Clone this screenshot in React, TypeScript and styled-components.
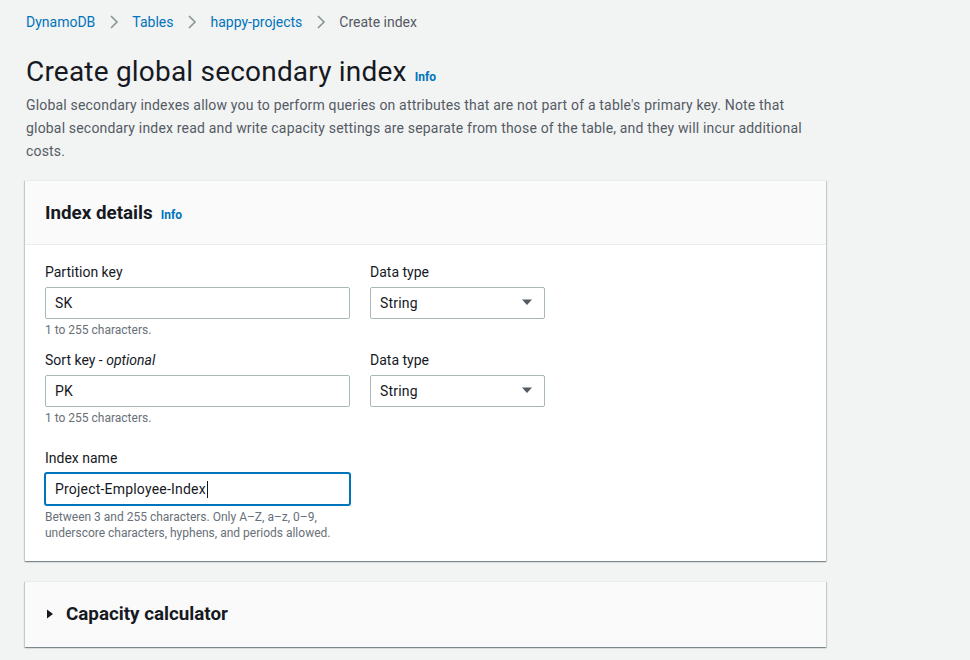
import React from "react";
import styled, { createGlobalStyle } from "styled-components";

const Global = createGlobalStyle`
  html, body { margin: 0; padding: 0; background: #f2f3f3; }
  body { font-family: Roboto, "Noto Sans", Arial, sans-serif; color: #16191f; -webkit-font-smoothing: antialiased; }
  * { box-sizing: border-box; }
`;

const Page = styled.div`
  width: 970px;
  height: 660px;
  overflow: hidden;
  padding: 12px 0 0 25px;
`;

const Crumbs = styled.nav`
  display: flex;
  align-items: center;
  height: 20px;
  padding-left: 1px;
  font-size: 14px;
  line-height: 20px;
`;

const CrumbLink = styled.a`
  color: #0073bb;
  text-decoration: none;
`;

const CrumbCurrent = styled.span`
  color: #545b64;
`;

const Sep = styled.span`
  display: inline-flex;
  width: 37px;
  justify-content: center;
  color: #879596;
`;

const TitleRow = styled.div`
  display: flex;
  align-items: baseline;
  gap: 8px;
  margin-top: 22px;
  padding-left: 1px;
`;

const Title = styled.h1`
  margin: 0;
  font-size: 28px;
  line-height: 36px;
  font-weight: 400;
  letter-spacing: 0.2px;
  color: #16191f;
`;

const Info = styled.a`
  color: #0073bb;
  font-size: 12px;
  font-weight: 700;
  text-decoration: none;
`;

const Description = styled.p`
  margin: 4px 0 0 1px;
  width: 800px;
  font-size: 14px;
  line-height: 23px;
  color: #545b64;
  letter-spacing: 0.18px;
`;

const Card = styled.section`
  width: 801px;
  margin-top: 17px;
  background: #fff;
  border-top: 1px solid #eaeded;
  box-shadow: 0 1px 1px 0 rgba(0, 28, 36, 0.3), 1px 1px 1px 0 rgba(0, 28, 36, 0.15),
    -1px 1px 1px 0 rgba(0, 28, 36, 0.15);
`;

const CardHeader = styled.header`
  display: flex;
  align-items: baseline;
  gap: 8px;
  height: 64px;
  padding: 20px 20px 0 20px;
  background: #fafafa;
  border-bottom: 1px solid #eaeded;
`;

const CardTitle = styled.h2`
  margin: 0;
  font-size: 18.8px;
  line-height: 24px;
  font-weight: 700;
  color: #16191f;
`;

const CardBody = styled.div`
  padding: 17px 20px 20px 20px;
  display: flex;
  flex-direction: column;
`;

const FieldRow = styled.div<{ $gap: number }>`
  display: flex;
  gap: 20px;
  margin-top: ${(p) => p.$gap}px;
`;

const Field = styled.div<{ $width: number }>`
  display: flex;
  flex-direction: column;
  width: ${(p) => p.$width}px;
`;

const Label = styled.label`
  font-size: 14px;
  line-height: 20px;
  color: #16191f;
  margin-bottom: 5px;
`;

const Optional = styled.i`
  font-style: italic;
`;

const Input = styled.div<{ $focused?: boolean }>`
  height: 32px;
  display: flex;
  align-items: center;
  padding: 0 9px;
  border: 1px solid ${(p) => (p.$focused ? "#0073bb" : "#aab7b8")};
  box-shadow: ${(p) => (p.$focused ? "0 0 0 1px #0073bb" : "none")};
  border-radius: 2px;
  background: #fff;
  font-size: 14px;
  letter-spacing: 0.2px;
  color: #16191f;
`;

const Caret = styled.span`
  display: inline-block;
  width: 1px;
  height: 17px;
  background: #16191f;
  margin-left: 1px;
`;

const Select = styled.div`
  height: 32px;
  display: flex;
  align-items: center;
  justify-content: space-between;
  padding: 0 11px 0 9px;
  border: 1px solid #aab7b8;
  border-radius: 2px;
  background: #fff;
  font-size: 14px;
  letter-spacing: 0.2px;
  color: #16191f;
`;

const Hint = styled.div<{ $gap?: number }>`
  margin-top: ${(p) => p.$gap ?? 3}px;
  font-size: 12px;
  line-height: 16px;
  color: #687078;
`;

const Collapsed = styled(Card)`
  margin-top: 20px;
  background: #fafafa;
`;

const CollapsedHeader = styled.div`
  display: flex;
  align-items: center;
  gap: 12px;
  height: 65px;
  padding: 0 21px 2px 21px;
`;

const Arrow = () => (
  <svg width="12" height="10" viewBox="0 0 12 10" aria-hidden="true">
    <path d="M1 1.5h10L6 7z" fill="#545b64" />
  </svg>
);

const Chevron = () => (
  <svg width="10" height="14" viewBox="0 0 10 14" aria-hidden="true">
    <path d="M2 1l6 6-6 6" fill="none" stroke="#879596" strokeWidth="1.6" />
  </svg>
);

const Triangle = () => (
  <svg width="8" height="10" viewBox="0 0 8 10" aria-hidden="true">
    <path d="M1 0.5v9l6-4.5z" fill="#16191f" />
  </svg>
);

export default function App() {
  return (
    <>
      <Global />
      <Page>
        <Crumbs>
          <CrumbLink>DynamoDB</CrumbLink>
          <Sep>
            <Chevron />
          </Sep>
          <CrumbLink>Tables</CrumbLink>
          <Sep>
            <Chevron />
          </Sep>
          <CrumbLink>happy-projects</CrumbLink>
          <Sep>
            <Chevron />
          </Sep>
          <CrumbCurrent>Create index</CrumbCurrent>
        </Crumbs>
        <TitleRow>
          <Title>Create global secondary index</Title>
          <Info>Info</Info>
        </TitleRow>
        <Description>
          Global secondary indexes allow you to perform queries on attributes that are not part of a table's primary
          key. Note that global secondary index read and write capacity settings are separate from those of the
          table, and they will incur additional costs.
        </Description>
        <Card>
          <CardHeader>
            <CardTitle>Index details</CardTitle>
            <Info>Info</Info>
          </CardHeader>
          <CardBody>
            <FieldRow $gap={0}>
              <Field $width={305}>
                <Label>Partition key</Label>
                <Input>SK</Input>
                <Hint>1 to 255 characters.</Hint>
              </Field>
              <Field $width={175}>
                <Label>Data type</Label>
                <Select>
                  String
                  <Arrow />
                </Select>
              </Field>
            </FieldRow>
            <FieldRow $gap={12}>
              <Field $width={305}>
                <Label>
                  Sort key - <Optional>optional</Optional>
                </Label>
                <Input>PK</Input>
                <Hint>1 to 255 characters.</Hint>
              </Field>
              <Field $width={175}>
                <Label>Data type</Label>
                <Select>
                  String
                  <Arrow />
                </Select>
              </Field>
            </FieldRow>
            <FieldRow $gap={22}>
              <Field $width={305}>
                <Label>Index name</Label>
                <Input $focused>
                  Project-Employee-Index
                  <Caret />
                </Input>
                <Hint $gap={4}>
                  Between 3 and 255 characters. Only A–Z, a–z, 0–9,
                  <br />
                  underscore characters, hyphens, and periods allowed.
                </Hint>
              </Field>
            </FieldRow>
          </CardBody>
        </Card>
        <Collapsed>
          <CollapsedHeader>
            <Triangle />
            <CardTitle>Capacity calculator</CardTitle>
          </CollapsedHeader>
        </Collapsed>
      </Page>
    </>
  );
}
